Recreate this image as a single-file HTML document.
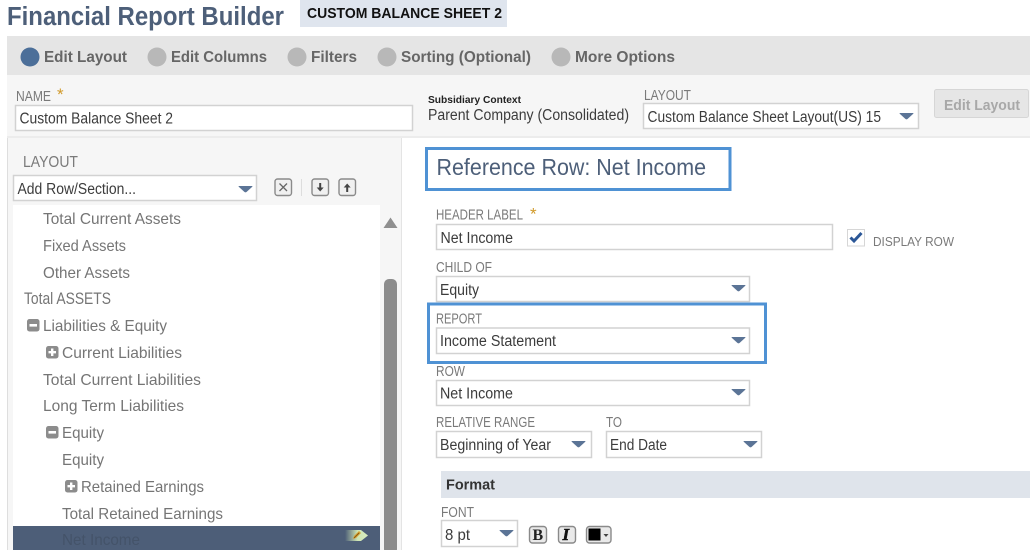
<!DOCTYPE html>
<html>
<head>
<meta charset="utf-8">
<title>Financial Report Builder</title>
<style>
html,body{margin:0;padding:0;background:#fff;width:1033px;height:550px;overflow:hidden}
svg{display:block;filter:blur(.3px)}
text{font-family:"Liberation Sans",sans-serif;font-size:15px;fill:#555}
.b{font-weight:bold}
.lb{fill:#7a7a7a;font-size:14.5px}
.t{fill:#757575;font-size:16px}
.v{fill:#3c3c3c;font-size:15.5px}
.f{fill:#fff;stroke:#d2d2d2;stroke-width:1.5}
.tab{font-weight:bold;font-size:16px;fill:#666}
.btn{fill:#e9e9e9;stroke:#8a8a8a;stroke-width:1.4}
</style>
</head>
<body>
<svg width="1033" height="550" viewBox="0 0 1033 550" xmlns="http://www.w3.org/2000/svg">
<defs>
<path id="ar" d="M1 0H14Q15 0 14 1L8.500 6Q7.500 6.800 6.500 6L1 1Q0 0 1 0Z" fill="#5b7496"/>
<linearGradient id="pg" x1="0" x2="1" y1="0" y2="0"><stop offset="0" stop-color="#4d5e78"/><stop offset=".55" stop-color="#cfe6b4"/><stop offset="1" stop-color="#d9edc0"/></linearGradient>
</defs>

<!-- header -->
<text x="7" y="25" class="b" style="font-size:25.500px;fill:#4d5f79" textLength="277" lengthAdjust="spacingAndGlyphs">Financial Report Builder</text>
<rect x="300" y="0" width="207" height="27" fill="#dfe5ee"/>
<text x="307" y="18" class="b" style="font-size:15px;fill:#111" textLength="195" lengthAdjust="spacingAndGlyphs">CUSTOM BALANCE SHEET 2</text>

<!-- tabs -->
<rect x="7" y="36" width="1023" height="39" fill="#e5e5e5"/>
<circle cx="30" cy="57" r="9.500" fill="#4c6f99"/>
<text x="44" y="62" class="tab" textLength="83" lengthAdjust="spacingAndGlyphs">Edit Layout</text>
<circle cx="157" cy="57" r="9.500" fill="#b8b8b8"/>
<text x="171" y="62" class="tab" textLength="96" lengthAdjust="spacingAndGlyphs">Edit Columns</text>
<circle cx="297" cy="57" r="9.500" fill="#b8b8b8"/>
<text x="311" y="62" class="tab" textLength="46" lengthAdjust="spacingAndGlyphs">Filters</text>
<circle cx="387" cy="57" r="9.500" fill="#b8b8b8"/>
<text x="401" y="62" class="tab" textLength="130" lengthAdjust="spacingAndGlyphs">Sorting (Optional)</text>
<circle cx="561" cy="57" r="9.500" fill="#b8b8b8"/>
<text x="575" y="62" class="tab" textLength="100" lengthAdjust="spacingAndGlyphs">More Options</text>

<!-- top form -->
<rect x="7" y="75" width="1023" height="61" fill="#f6f6f6"/>
<rect x="7" y="136" width="1023" height="2" fill="#ececec"/>
<text x="16" y="101" class="lb" textLength="35" lengthAdjust="spacingAndGlyphs">NAME</text>
<text x="57" y="100" style="font-size:17px;fill:#d19a2a">*</text>
<rect x="15.500" y="105.500" width="397" height="25" class="f"/>
<text x="19.500" y="123.500" class="v" textLength="153.500" lengthAdjust="spacingAndGlyphs">Custom Balance Sheet 2</text>
<text x="428" y="103" class="b" style="font-size:10.500px;fill:#222" textLength="93" lengthAdjust="spacingAndGlyphs">Subsidiary Context</text>
<text x="428" y="120" class="v" textLength="201" lengthAdjust="spacingAndGlyphs">Parent Company (Consolidated)</text>
<text x="644" y="100" class="lb" textLength="47" lengthAdjust="spacingAndGlyphs">LAYOUT</text>
<rect x="643.500" y="103.500" width="275" height="25" class="f"/>
<text x="647.500" y="122" class="v" textLength="233.500" lengthAdjust="spacingAndGlyphs">Custom Balance Sheet Layout(US) 15</text>
<use href="#ar" x="899" y="113"/>
<rect x="934.500" y="89.500" width="94" height="28" rx="2" fill="#e6e6e6" stroke="#d6d6d6"/>
<text x="944" y="110" class="b" style="fill:#a8a8a8;font-size:15px" textLength="76" lengthAdjust="spacingAndGlyphs">Edit Layout</text>

<!-- left panel -->
<rect x="7" y="138" width="394" height="412" fill="#f6f6f6"/>
<rect x="7" y="138" width="1" height="412" fill="#dedede"/>
<rect x="401" y="138" width="1" height="412" fill="#e4e4e4"/>
<text x="23" y="167" class="lb" textLength="55" lengthAdjust="spacingAndGlyphs" style="font-size:15.500px">LAYOUT</text>
<rect x="13.500" y="175.500" width="243" height="25" class="f"/>
<text x="17.500" y="194" class="v" textLength="118.500" lengthAdjust="spacingAndGlyphs">Add Row/Section...</text>
<use href="#ar" x="238" y="186"/>

<rect x="275" y="179" width="16.500" height="16.500" rx="2.500" class="btn" style="fill:#f0f0f0"/>
<path d="M279.500 183.500l7.500 7.500M287 183.500l-7.500 7.500" stroke="#666" stroke-width="1.300" fill="none"/>
<rect x="301" y="179" width="1" height="17" fill="#ddd"/>
<rect x="312" y="179" width="16.500" height="16.500" rx="2.500" class="btn" style="fill:#f0f0f0"/>
<path d="M320.200 183v5" stroke="#444" stroke-width="2"/><path d="M316.700 187.500h7l-3.500 4z" fill="#444"/>
<rect x="339" y="179" width="16.500" height="16.500" rx="2.500" class="btn" style="fill:#f0f0f0"/>
<path d="M347.200 187v5" stroke="#444" stroke-width="2"/><path d="M343.700 187.500h7l-3.500 -4z" fill="#444"/>

<rect x="13" y="205" width="367" height="345" fill="#fff"/>
<path d="M383.500 228L390.500 217.500L397.500 228Z" fill="#8f8f8f"/>
<rect x="384" y="279" width="13" height="275" rx="5" fill="#8c8c8c"/>

<text x="43" y="224" class="t" textLength="138" lengthAdjust="spacingAndGlyphs">Total Current Assets</text>
<text x="43" y="251" class="t" textLength="83" lengthAdjust="spacingAndGlyphs">Fixed Assets</text>
<text x="43" y="278" class="t" textLength="87" lengthAdjust="spacingAndGlyphs">Other Assets</text>
<text x="24" y="304" class="t" style="font-size:16.500px" textLength="87" lengthAdjust="spacingAndGlyphs">Total ASSETS</text>
<rect x="27" y="319" width="12.500" height="12.500" rx="2.500" fill="#8c8c8c"/><rect x="29.500" y="324" width="7.500" height="2.600" fill="#fff"/>
<text x="43" y="331" class="t" textLength="124" lengthAdjust="spacingAndGlyphs">Liabilities &amp; Equity</text>
<rect x="46" y="346" width="12.500" height="12.500" rx="2.500" fill="#8c8c8c"/><path d="M52.200 348.500v7.500M48.500 352.200h7.500" stroke="#fff" stroke-width="2.400"/>
<text x="62" y="358" class="t" textLength="120" lengthAdjust="spacingAndGlyphs">Current Liabilities</text>
<text x="43" y="385" class="t" textLength="158" lengthAdjust="spacingAndGlyphs">Total Current Liabilities</text>
<text x="43" y="411" class="t" textLength="141" lengthAdjust="spacingAndGlyphs">Long Term Liabilities</text>
<rect x="46" y="426" width="12.500" height="12.500" rx="2.500" fill="#8c8c8c"/><rect x="48.500" y="431" width="7.500" height="2.600" fill="#fff"/>
<text x="62" y="438" class="t" textLength="42" lengthAdjust="spacingAndGlyphs">Equity</text>
<text x="62" y="465" class="t" textLength="42" lengthAdjust="spacingAndGlyphs">Equity</text>
<rect x="65" y="480" width="12.500" height="12.500" rx="2.500" fill="#8c8c8c"/><path d="M71.200 482.500v7.500M67.500 486.200h7.500" stroke="#fff" stroke-width="2.400"/>
<text x="81" y="492" class="t" textLength="123" lengthAdjust="spacingAndGlyphs">Retained Earnings</text>
<text x="62" y="519" class="t" textLength="161" lengthAdjust="spacingAndGlyphs">Total Retained Earnings</text>
<rect x="13" y="526" width="367" height="24" fill="#4d5e78"/>
<text x="62" y="545" class="t" style="fill:#445369" textLength="78" lengthAdjust="spacingAndGlyphs">Net Income</text>
<path d="M345 530H361L368 535.500L361 541H345Z" fill="url(#pg)"/>
<path d="M353 539l1 -3 5 -5 2 2 -5 5z" fill="#d3a030"/>
<path d="M354 538l5 -5" stroke="#7a4a10" stroke-width=".8"/>

<!-- right panel -->
<rect x="426.500" y="148.500" width="303.500" height="41" fill="none" stroke="#4f92d4" stroke-width="3"/>
<text x="436.500" y="175" style="font-size:23.500px;fill:#4d5f79" textLength="269.500" lengthAdjust="spacingAndGlyphs">Reference Row: Net Income</text>

<text x="436" y="219.500" class="lb" textLength="87" lengthAdjust="spacingAndGlyphs">HEADER LABEL</text>
<text x="530" y="219.500" style="font-size:17px;fill:#d19a2a">*</text>
<rect x="436.500" y="224.500" width="396" height="25" class="f"/>
<text x="440.500" y="243" class="v" textLength="72.500" lengthAdjust="spacingAndGlyphs">Net Income</text>

<rect x="847.500" y="229.500" width="17" height="16.500" fill="#fff" stroke="#d6d6d6"/>
<path d="M850.500 237.500l3.500 3.500 7.500 -8" fill="none" stroke="#2b5797" stroke-width="3"/>
<text x="873" y="246" style="font-size:13px;fill:#7a7a7a" textLength="81" lengthAdjust="spacingAndGlyphs">DISPLAY ROW</text>

<text x="436" y="272" class="lb" textLength="56" lengthAdjust="spacingAndGlyphs">CHILD OF</text>
<rect x="436.500" y="276.500" width="313" height="25" class="f"/>
<text x="440" y="295" class="v" textLength="39" lengthAdjust="spacingAndGlyphs">Equity</text>
<use href="#ar" x="731" y="285"/>

<rect x="428.500" y="304" width="337" height="58.500" fill="none" stroke="#4f92d4" stroke-width="3"/>
<text x="436" y="323.500" class="lb" textLength="46" lengthAdjust="spacingAndGlyphs">REPORT</text>
<rect x="436.500" y="328" width="313" height="25.500" class="f"/>
<text x="440" y="346" class="v" textLength="116" lengthAdjust="spacingAndGlyphs">Income Statement</text>
<use href="#ar" x="731" y="337"/>

<text x="436" y="376" class="lb" textLength="29" lengthAdjust="spacingAndGlyphs">ROW</text>
<rect x="436.500" y="380.500" width="313" height="25" class="f"/>
<text x="440" y="398.500" class="v" textLength="73" lengthAdjust="spacingAndGlyphs">Net Income</text>
<use href="#ar" x="731" y="389"/>

<text x="436" y="427" class="lb" textLength="99" lengthAdjust="spacingAndGlyphs">RELATIVE RANGE</text>
<text x="606" y="427" class="lb" textLength="16" lengthAdjust="spacingAndGlyphs">TO</text>
<rect x="436.500" y="431.500" width="155" height="26" class="f"/>
<text x="440" y="450" class="v" textLength="111" lengthAdjust="spacingAndGlyphs">Beginning of Year</text>
<use href="#ar" x="571" y="441"/>
<rect x="606.500" y="431.500" width="155" height="26" class="f"/>
<text x="610" y="450" class="v" textLength="57" lengthAdjust="spacingAndGlyphs">End Date</text>
<use href="#ar" x="743" y="441"/>

<rect x="441" y="471" width="589" height="27" fill="#dfe4eb"/>
<text x="446" y="489.500" class="b" style="font-size:15px;fill:#333" textLength="49" lengthAdjust="spacingAndGlyphs">Format</text>

<text x="441" y="517" class="lb" textLength="33" lengthAdjust="spacingAndGlyphs">FONT</text>
<rect x="441.500" y="520.500" width="76" height="26" class="f"/>
<text x="445" y="540" class="v" textLength="25" lengthAdjust="spacingAndGlyphs">8 pt</text>
<use href="#ar" x="499" y="530"/>

<rect x="529.500" y="526.500" width="17" height="16.500" rx="3" class="btn"/>
<text x="532.500" y="540" style="font-family:'Liberation Serif',serif;font-weight:bold;font-size:16px;fill:#222">B</text>
<rect x="558.500" y="526.500" width="17" height="16.500" rx="3" class="btn"/>
<text x="562.500" y="540" style="font-family:'Liberation Serif',serif;font-weight:bold;font-style:italic;font-size:17px;fill:#111;stroke:#111;stroke-width:.5">I</text>
<rect x="586.500" y="526.500" width="24.500" height="16.500" rx="3" class="btn"/>
<rect x="588.500" y="528.500" width="12" height="12" fill="#000"/>
<path d="M603.500 534h5l-2.500 3z" fill="#444"/>
</svg>
</body>
</html>
